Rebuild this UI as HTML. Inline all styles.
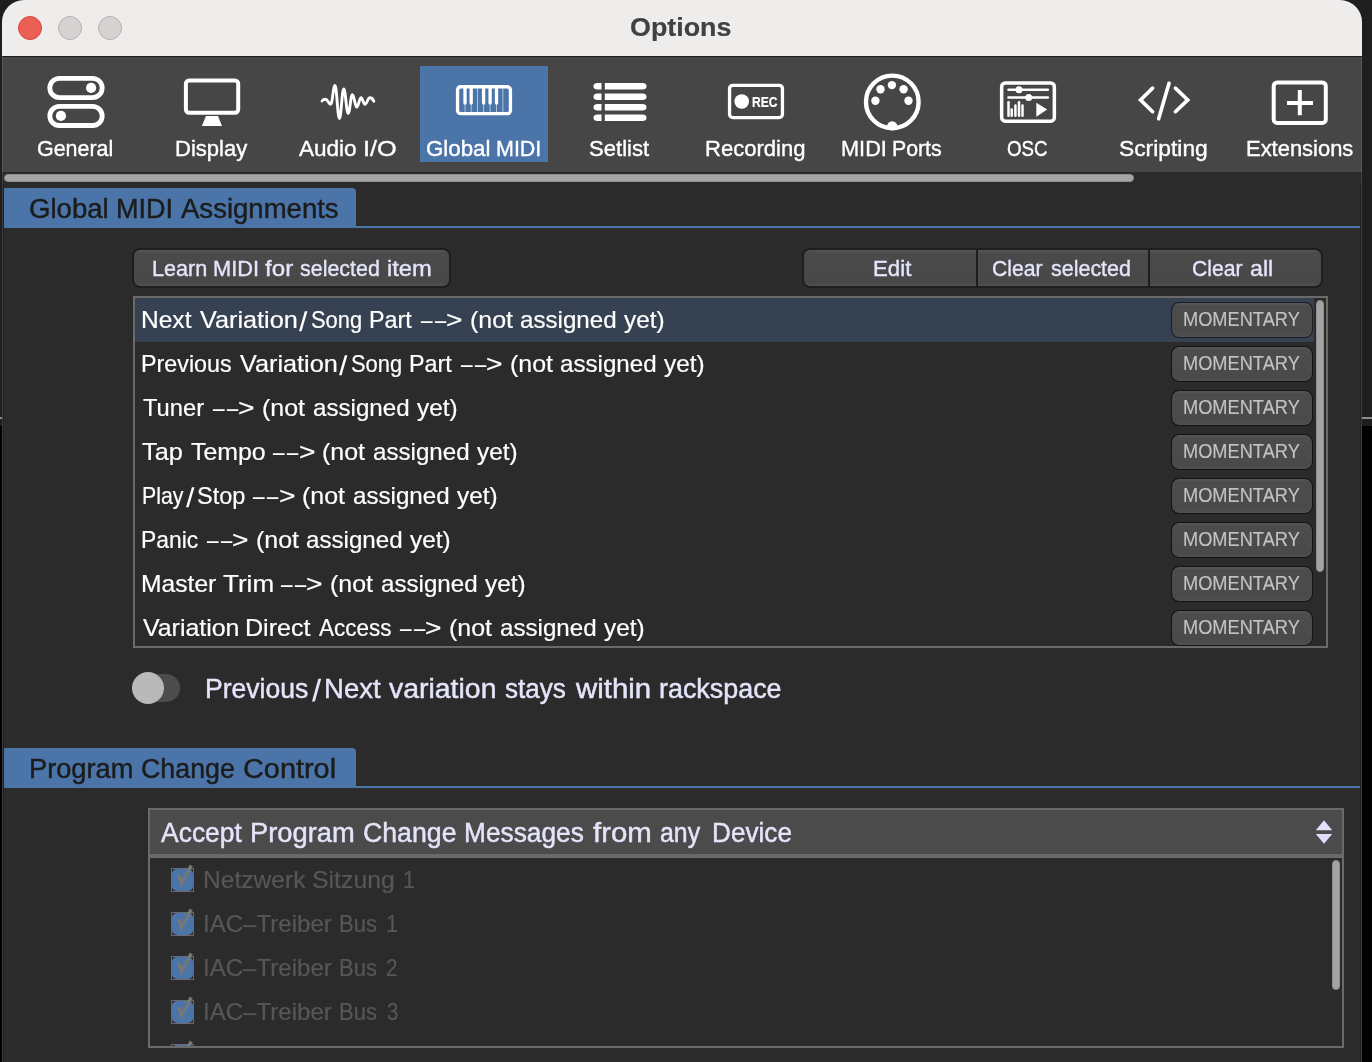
<!DOCTYPE html>
<html>
<head>
<meta charset="utf-8">
<title>Options</title>
<style>
*{box-sizing:border-box;margin:0;padding:0}
html,body{width:1372px;height:1062px;overflow:hidden;background:#000}
body{font-family:"Liberation Sans",sans-serif;position:relative;color:#fff}
.abs{position:absolute}
.w{position:absolute;white-space:pre;line-height:1;transform-origin:0 0;display:block}
#desk-top{left:0;top:0;width:1372px;height:426px;background:#1e1e1e}
#desk-line{left:0;top:417px;width:1372px;height:2px;background:#8c8c8c}
#win{left:2px;top:0;width:1360px;height:1080px;background:#2b2b2b;border-radius:22px 22px 0 0;overflow:hidden}
#titlebar{left:0;top:0;width:1360px;height:57px;background:#efedec;border-bottom:1px solid #1c1c1c}
.tl{position:absolute;top:16px;width:24px;height:24px;border-radius:50%}
#toolbar{left:0;top:57px;width:1360px;height:115px;background:#464646}
.tbitem{position:absolute;top:9px;width:128px;height:96px}
.tbitem.sel{background:#4b75a9}
.tblabel{position:absolute;left:0;width:128px;text-align:center;top:70px;font-size:22px;line-height:26px;white-space:pre;color:#fff}
.tbitem svg{position:absolute;left:0;top:0}
#hscroll{left:2px;top:174px;width:1130px;height:8px;border-radius:4px;background:#a6a6a6;border:1px solid #8f8f8f}
.sechead{position:absolute;left:2px;width:352px;height:39px;background:#4b75a9;border-radius:0 4px 0 0}
.secline{position:absolute;left:2px;width:1356px;height:2px;background:#4b75a9}
.sectxt{font-size:26px;color:#1c1c1c}
.btn{position:absolute;background:linear-gradient(#575757 0,#4a4a4a 3px,#484848 calc(100% - 3px),#525252 100%);border:2px solid #1e1e1e;border-radius:8px;color:#e4e4fa;font-size:22px;text-align:center;white-space:pre}
#list1{left:131px;top:296px;width:1195px;height:352px;border:2px solid #6a6a6a;background:#2b2b2b;overflow:hidden}
.row{position:absolute;left:0;width:1179px;height:44px}
.row.sel{background:#364252}
.row .rt{position:absolute;left:8px;top:9px;font-size:22px;line-height:26px;white-space:pre;color:#fff}
.mom{position:absolute;left:1036px;top:4px;width:142px;height:35.5px;border-radius:8px;background:linear-gradient(#585858 0,#4c4c4c 3px,#4a4a4a calc(100% - 3px),#525252 100%);border:1.5px solid rgba(0,0,0,.55);background-clip:padding-box;color:#c2c2c2;font-size:18px;line-height:32px;text-align:center}
.vthumb{position:absolute;width:8px;border-radius:4px;background:#a3a3a3;border:1px solid #8f8f8f}
#box2{left:146px;top:808px;width:1196px;height:240px;border:2px solid #6a6a6a;background:#2b2b2b;overflow:hidden}
#combo{left:0;top:0;width:1192px;height:44px;background:#4b4b4b}
#combodiv{left:0;top:44px;width:1192px;height:4px;background:#6a6a6a}
.crow{position:absolute;left:0;width:1180px;height:44px}
.cb{position:absolute;left:21px;top:10px;width:23px;height:24px;border:1px solid #6a6a6a}
.cb i{position:absolute;left:0;top:0;right:0;bottom:0;background:#4b75a9;border-radius:5px}
.crow svg{position:absolute;left:0;top:0}
.crow .ct{position:absolute;left:55px;top:9px;font-size:22px;line-height:26px;white-space:pre;color:#585858}
</style>
</head>
<body>
<div id="desk-top" class="abs"></div>
<div id="desk-line" class="abs"></div>
<div id="win" class="abs">
  <div id="titlebar" class="abs">
    <div class="tl" style="left:16px;background:#ec5f55;border:1px solid #d24b41"></div>
    <div class="tl" style="left:56px;background:#d5d3d2;border:1px solid #b3b1b0"></div>
    <div class="tl" style="left:96px;background:#d5d3d2;border:1px solid #b3b1b0"></div>
  </div>
  <div id="toolbar" class="abs">
    <div class="tbitem" style="left:10px"><svg width="128" height="96" viewBox="0 0 128 96"><g fill="none" stroke="#fff" stroke-width="4.8"><rect x="37.8" y="12.3" width="52.4" height="19.3" rx="9.65"/><rect x="37.8" y="40.4" width="52.4" height="19.1" rx="9.55"/></g><circle cx="79.1" cy="21.9" r="5.1" fill="#fff"/><circle cx="48.9" cy="49.9" r="5.1" fill="#fff"/></svg></div>
<div class="tbitem" style="left:146px"><svg width="128" height="96" viewBox="0 0 128 96"><rect x="37.9" y="14.4" width="52.3" height="32.4" rx="3.2" fill="none" stroke="#fff" stroke-width="4"/><path d="M58 50.1 L70 50.1 L74 59.9 L53.9 59.9 Z" fill="#fff"/></svg></div>
<div class="tbitem" style="left:282px"><svg width="128" height="96" viewBox="0 0 128 96"><path d="M38.06 34.99 C38.80 33.89 40.09 33.26 41.56 33.26 C43.71 33.26 44.54 38.25 46.69 38.25 C48.49 38.25 49.18 19.50 50.98 19.5 C52.84 19.50 53.55 52.48 55.41 52.48 C57.23 52.48 57.93 22.86 59.75 22.86 C61.61 22.86 62.32 47.35 64.18 47.35 C65.94 47.35 66.62 28.69 68.38 28.69 C70.24 28.69 70.95 41.05 72.81 41.05 C74.57 41.05 75.25 31.72 77.01 31.72 C78.67 31.72 79.31 38.25 80.97 38.25 C83.03 38.25 83.81 31.72 85.87 31.72 C87.54 31.72 89.01 33.02 89.84 35.22" fill="none" stroke="#fff" stroke-width="2.9" stroke-linecap="round" stroke-linejoin="round"/></svg></div>
<div class="tbitem sel" style="left:418px"><svg width="128" height="96" viewBox="0 0 128 96"><rect x="37.55" y="20.75" width="52.9" height="26.9" rx="3.2" fill="none" stroke="#fff" stroke-width="3.3"/><line x1="45" y1="21" x2="45" y2="47.5" stroke="#fff" stroke-opacity="0.55" stroke-width="1"/><line x1="51.2" y1="21" x2="51.2" y2="47.5" stroke="#fff" stroke-opacity="0.55" stroke-width="1"/><line x1="57.5" y1="21" x2="57.5" y2="47.5" stroke="#fff" stroke-opacity="0.55" stroke-width="1"/><line x1="63.6" y1="21" x2="63.6" y2="47.5" stroke="#fff" stroke-opacity="0.55" stroke-width="1"/><line x1="70.1" y1="21" x2="70.1" y2="47.5" stroke="#fff" stroke-opacity="0.55" stroke-width="1"/><line x1="76.5" y1="21" x2="76.5" y2="47.5" stroke="#fff" stroke-opacity="0.55" stroke-width="1"/><line x1="82.9" y1="21" x2="82.9" y2="47.5" stroke="#fff" stroke-opacity="0.55" stroke-width="1"/><line x1="45" y1="21" x2="45" y2="37" stroke="#fff" stroke-width="3.3" stroke-linecap="round"/><line x1="51.2" y1="21" x2="51.2" y2="37" stroke="#fff" stroke-width="3.3" stroke-linecap="round"/><line x1="63.6" y1="21" x2="63.6" y2="37" stroke="#fff" stroke-width="3.3" stroke-linecap="round"/><line x1="70.1" y1="21" x2="70.1" y2="37" stroke="#fff" stroke-width="3.3" stroke-linecap="round"/><line x1="76.5" y1="21" x2="76.5" y2="37" stroke="#fff" stroke-width="3.3" stroke-linecap="round"/></svg></div>
<div class="tbitem" style="left:554px"><svg width="128" height="96" viewBox="0 0 128 96"><g fill="#fff"><path d="M45.5 16.9 L41.80 16.9 A4.30 3.30 0 0 0 41.80 23.5 L45.5 23.5 Z"/><path d="M48.8 16.9 L86.20 16.9 A4.30 3.30 0 0 1 86.20 23.5 L48.8 23.5 Z"/><path d="M45.5 27.5 L41.70 27.5 A4.20 3.20 0 0 0 41.70 33.9 L45.5 33.9 Z"/><path d="M48.8 27.5 L86.30 27.5 A4.20 3.20 0 0 1 86.30 33.9 L48.8 33.9 Z"/><path d="M45.5 38 L41.75 38 A4.25 3.25 0 0 0 41.75 44.5 L45.5 44.5 Z"/><path d="M48.8 38 L86.25 38 A4.25 3.25 0 0 1 86.25 44.5 L48.8 44.5 Z"/><path d="M45.5 48.5 L41.75 48.5 A4.25 3.25 0 0 0 41.75 55 L45.5 55 Z"/><path d="M48.8 48.5 L86.25 48.5 A4.25 3.25 0 0 1 86.25 55 L48.8 55 Z"/></g></svg></div>
<div class="tbitem" style="left:690px"><svg width="128" height="96" viewBox="0 0 128 96"><rect x="37.55" y="19.35" width="52.9" height="32.2" rx="3.2" fill="none" stroke="#fff" stroke-width="3.3"/><circle cx="49.7" cy="35.5" r="7.3" fill="#fff"/></svg></div>
<div class="tbitem" style="left:826px"><svg width="128" height="96" viewBox="0 0 128 96"><defs><clipPath id="mp"><circle cx="64.3" cy="35.9" r="28.4"/></clipPath></defs><circle cx="64.3" cy="35.9" r="26.3" fill="none" stroke="#fff" stroke-width="4.4"/><g fill="#fff"><circle cx="63.9" cy="19.1" r="4.2"/><circle cx="52.5" cy="23.3" r="4.2"/><circle cx="75.6" cy="23.3" r="4.2"/><circle cx="47.4" cy="34.8" r="4.2"/><circle cx="80.5" cy="34.8" r="4.2"/><circle cx="64.2" cy="60.4" r="5.2" clip-path="url(#mp)"/></g></svg></div>
<div class="tbitem" style="left:962px"><svg width="128" height="96" viewBox="0 0 128 96"><rect x="37.65" y="17.05" width="52.7" height="38.1" rx="3.6" fill="none" stroke="#fff" stroke-width="3.5"/><g fill="#fff"><rect x="43.2" y="22.5" width="41.9" height="2.5" rx="1.25"/><rect x="43.2" y="30.3" width="41.9" height="2.5" rx="1.25"/><circle cx="55" cy="23.8" r="3.5"/><circle cx="64.7" cy="31.5" r="3.5"/><rect x="43.25" y="35" width="2.5" height="16" rx="1.2"/><rect x="46.45" y="42.3" width="2.5" height="8.700000000000003" rx="1.2"/><rect x="50.15" y="38.3" width="2.5" height="12.700000000000003" rx="1.2"/><rect x="53.75" y="35" width="2.5" height="16" rx="1.2"/><rect x="57.25" y="38.3" width="2.5" height="12.700000000000003" rx="1.2"/><path d="M72.3 36.8 L83.2 43.6 L72.3 50.7 Z"/></g></svg></div>
<div class="tbitem" style="left:1098px"><svg width="128" height="96" viewBox="0 0 128 96"><g fill="none" stroke="#fff" stroke-width="3.6" stroke-linecap="round" stroke-linejoin="miter"><path d="M52.6 22.1 L40.5 33.9 L52.6 45.7"/><path d="M69.04 17.25 L58.66 52.85"/><path d="M75.4 22.1 L87.75 33.9 L75.4 45.7"/></g></svg></div>
<div class="tbitem" style="left:1234px"><svg width="128" height="96" viewBox="0 0 128 96"><rect x="37.7" y="16.4" width="52.1" height="40.6" rx="3.6" fill="none" stroke="#fff" stroke-width="4"/><g fill="#fff"><rect x="51" y="35" width="26" height="4"/><rect x="61.8" y="24" width="4" height="25.2"/></g></svg></div>

  </div>
  <div id="hscroll" class="abs"></div>

  <div class="sechead" style="top:188px"></div>
  <div class="secline" style="top:226px"></div>

  <div class="btn" id="b-learn" style="left:130px;top:248px;width:319px;height:40px"></div>
  <div class="btn" id="b-edit" style="left:800px;top:248px;width:176px;height:40px;border-radius:8px 0 0 8px"></div>
  <div class="btn" id="b-clsel" style="left:974px;top:248px;width:174px;height:40px;border-radius:0"></div>
  <div class="btn" id="b-clall" style="left:1146px;top:248px;width:175px;height:40px;border-radius:0 8px 8px 0"></div>

  <div id="list1" class="abs">
    <div class="row sel" style="top:0px"><div class="mom"></div></div>
<div class="row" style="top:44px"><div class="mom"></div></div>
<div class="row" style="top:88px"><div class="mom"></div></div>
<div class="row" style="top:132px"><div class="mom"></div></div>
<div class="row" style="top:176px"><div class="mom"></div></div>
<div class="row" style="top:220px"><div class="mom"></div></div>
<div class="row" style="top:264px"><div class="mom"></div></div>
<div class="row" style="top:308px"><div class="mom"></div></div>

    <div class="vthumb" style="left:1181px;top:2px;height:272px"></div>
  </div>

  <div class="abs" id="tog-track" style="left:132px;top:674px;width:46px;height:28px;border-radius:14px;background:#4c4c4c"></div>
  <div class="abs" id="tog-knob" style="left:130px;top:672px;width:32px;height:32px;border-radius:16px;background:#b9b9b9"></div>

  <div class="sechead" style="top:748px"></div>
  <div class="secline" style="top:786px"></div>

  <div class="abs" style="left:1px;top:184px;width:1px;height:900px;background:#1f1f1f"></div>
  <div class="abs" style="left:1358px;top:184px;width:1px;height:900px;background:#1f1f1f"></div>
  <div class="abs" style="left:0;top:56px;width:1px;height:1100px;background:rgba(255,255,255,0.1)"></div>
  <div class="abs" style="left:1359px;top:56px;width:1px;height:1100px;background:rgba(255,255,255,0.1)"></div>
  <div id="box2" class="abs">
    <div id="combo" class="abs"></div>
    <svg class="abs" style="left:1162px;top:8px" width="24" height="32" viewBox="0 0 24 32"><path d="M12 2.2 L20.2 12.2 L3.8 12.2 Z M3.8 16 L20.2 16 L12 25.7 Z" fill="#e0e0f8"/></svg>
    <div id="combodiv" class="abs"></div>
    <div class="crow" style="top:48px"><div class="cb"><i></i></div><svg width="60" height="44" viewBox="0 0 60 44"><path d="M26.8 17.5 L29.7 16.1 L32.5 21.3 L39.7 6.4 L42.8 8.6 L31.4 29.8 Z" fill="#777"/></svg></div>
<div class="crow" style="top:92px"><div class="cb"><i></i></div><svg width="60" height="44" viewBox="0 0 60 44"><path d="M26.8 17.5 L29.7 16.1 L32.5 21.3 L39.7 6.4 L42.8 8.6 L31.4 29.8 Z" fill="#777"/></svg></div>
<div class="crow" style="top:136px"><div class="cb"><i></i></div><svg width="60" height="44" viewBox="0 0 60 44"><path d="M26.8 17.5 L29.7 16.1 L32.5 21.3 L39.7 6.4 L42.8 8.6 L31.4 29.8 Z" fill="#777"/></svg></div>
<div class="crow" style="top:180px"><div class="cb"><i></i></div><svg width="60" height="44" viewBox="0 0 60 44"><path d="M26.8 17.5 L29.7 16.1 L32.5 21.3 L39.7 6.4 L42.8 8.6 L31.4 29.8 Z" fill="#777"/></svg></div>
<div class="crow" style="top:224px"><div class="cb"><i></i></div><svg width="60" height="44" viewBox="0 0 60 44"><path d="M26.8 17.5 L29.7 16.1 L32.5 21.3 L39.7 6.4 L42.8 8.6 L31.4 29.8 Z" fill="#777"/></svg></div>

    <div class="vthumb" style="left:1182px;top:50px;height:130px"></div>
  </div>
</div>
<div id="textlayer" class="abs" style="left:0;top:0;width:1372px;height:1062px;overflow:hidden;will-change:transform">
<div id="tb0" style="position:absolute;left:0;top:137px;font-size:22.7px;font-weight:400;color:#ffffff;-webkit-text-stroke:0.38px #ffffff"><span class="w" style="left:37.41px;transform:scaleX(0.9451)">General</span></div>
<div id="tb1" style="position:absolute;left:0;top:137px;font-size:22.7px;font-weight:400;color:#ffffff;-webkit-text-stroke:0.38px #ffffff"><span class="w" style="left:175.39px;transform:scaleX(0.9713)">Display</span></div>
<div id="tb2" style="position:absolute;left:0;top:137px;font-size:22.7px;font-weight:400;color:#ffffff;-webkit-text-stroke:0.38px #ffffff"><span class="w" style="left:299.44px;transform:scaleX(0.9933)">Audio</span><span class="w" style="left:362.96px;transform:scaleX(1.1146)">I/O</span></div>
<div id="tb3" style="position:absolute;left:0;top:137px;font-size:22.7px;font-weight:400;color:#ffffff;-webkit-text-stroke:0.38px #ffffff"><span class="w" style="left:425.71px;transform:scaleX(0.9820)">Global</span><span class="w" style="left:496.03px;transform:scaleX(0.9459)">MIDI</span></div>
<div id="tb4" style="position:absolute;left:0;top:137px;font-size:22.7px;font-weight:400;color:#ffffff;-webkit-text-stroke:0.38px #ffffff"><span class="w" style="left:589.12px;transform:scaleX(0.9732)">Setlist</span></div>
<div id="tb5" style="position:absolute;left:0;top:137px;font-size:22.7px;font-weight:400;color:#ffffff;-webkit-text-stroke:0.38px #ffffff"><span class="w" style="left:705.24px;transform:scaleX(0.9713)">Recording</span></div>
<div id="tb6" style="position:absolute;left:0;top:137px;font-size:22.7px;font-weight:400;color:#ffffff;-webkit-text-stroke:0.38px #ffffff"><span class="w" style="left:840.51px;transform:scaleX(0.9573)">MIDI</span><span class="w" style="left:891.55px;transform:scaleX(0.9381)">Ports</span></div>
<div id="tb7" style="position:absolute;left:0;top:137px;font-size:22.7px;font-weight:400;color:#ffffff;-webkit-text-stroke:0.38px #ffffff"><span class="w" style="left:1007.37px;transform:scaleX(0.8237)">OSC</span></div>
<div id="tb8" style="position:absolute;left:0;top:137px;font-size:22.7px;font-weight:400;color:#ffffff;-webkit-text-stroke:0.38px #ffffff"><span class="w" style="left:1119.18px;transform:scaleX(1.0055)">Scripting</span></div>
<div id="tb9" style="position:absolute;left:0;top:137px;font-size:22.7px;font-weight:400;color:#ffffff;-webkit-text-stroke:0.38px #ffffff"><span class="w" style="left:1245.60px;transform:scaleX(0.9670)">Extensions</span></div>
<div id="rec" style="position:absolute;left:0;top:94px;font-size:15.4px;font-weight:700;color:#ffffff;-webkit-text-stroke:0.20px #ffffff"><span class="w" style="left:751.92px;transform:scaleX(0.7839)">REC</span></div>
<div id="title" style="position:absolute;left:0;top:14px;font-size:26.5px;font-weight:700;color:#414141;-webkit-text-stroke:0.20px #414141"><span class="w" style="left:629.99px;transform:scaleX(1.0133)">Options</span></div>
<div id="sec1" style="position:absolute;left:0;top:196px;font-size:27.0px;font-weight:400;color:#1c1c1c;-webkit-text-stroke:0.45px #1c1c1c"><span class="w" style="left:29.45px;transform:scaleX(1.0207)">Global</span><span class="w" style="left:115.97px;transform:scaleX(1.0010)">MIDI</span><span class="w" style="left:181.22px;transform:scaleX(1.0199)">Assignments</span></div>
<div id="sec2" style="position:absolute;left:0;top:756px;font-size:27.0px;font-weight:400;color:#1c1c1c;-webkit-text-stroke:0.45px #1c1c1c"><span class="w" style="left:29.21px;transform:scaleX(1.0080)">Program</span><span class="w" style="left:141.24px;transform:scaleX(0.9924)">Change</span><span class="w" style="left:243.12px;transform:scaleX(1.0693)">Control</span></div>
<div id="b-learn" style="position:absolute;left:0;top:258px;font-size:22.2px;font-weight:400;color:#e4e4fa;-webkit-text-stroke:0.37px #e4e4fa"><span class="w" style="left:151.78px;transform:scaleX(0.9744)">Learn</span><span class="w" style="left:212.67px;transform:scaleX(0.9821)">MIDI</span><span class="w" style="left:265.11px;transform:scaleX(1.0903)">for</span><span class="w" style="left:300.26px;transform:scaleX(0.9656)">selected</span><span class="w" style="left:386.68px;transform:scaleX(1.0700)">item</span></div>
<div id="b-edit" style="position:absolute;left:0;top:258px;font-size:22.2px;font-weight:400;color:#e4e4fa;-webkit-text-stroke:0.37px #e4e4fa"><span class="w" style="left:873.03px;transform:scaleX(1.0022)">Edit</span></div>
<div id="b-clsel" style="position:absolute;left:0;top:258px;font-size:22.2px;font-weight:400;color:#e4e4fa;-webkit-text-stroke:0.37px #e4e4fa"><span class="w" style="left:991.99px;transform:scaleX(0.9540)">Clear</span><span class="w" style="left:1050.71px;transform:scaleX(0.9675)">selected</span></div>
<div id="b-clall" style="position:absolute;left:0;top:258px;font-size:22.2px;font-weight:400;color:#e4e4fa;-webkit-text-stroke:0.37px #e4e4fa"><span class="w" style="left:1191.99px;transform:scaleX(0.9540)">Clear</span><span class="w" style="left:1249.89px;transform:scaleX(1.0446)">all</span></div>
<div id="r0" style="position:absolute;left:0;top:308px;font-size:24.0px;font-weight:400;color:#ffffff;-webkit-text-stroke:0.20px #ffffff"><span class="w" style="left:141.06px;transform:scaleX(1.0222)">Next</span><span class="w" style="left:199.59px;transform:scaleX(1.0526)">Variation</span><svg style="position:absolute;left:299.10px;top:0;overflow:visible" width="8.40" height="28.8"><path d="M5.81 3.25 L8.40 3.25 L2.59 23.35 L0 23.35 Z" fill="#ffffff"/></svg><span class="w" style="left:310.71px;transform:scaleX(0.9117)">Song</span><span class="w" style="left:369.16px;transform:scaleX(0.9713)">Part</span><span class="w" style="left:420.95px;transform:scaleX(0.8604)">–</span><span class="w" style="left:434.65px;transform:scaleX(0.8302)">–</span><span class="w" style="left:446.08px;transform:scaleX(1.1739)">&gt;</span><span class="w" style="left:469.59px;transform:scaleX(1.0390)">(not</span><span class="w" style="left:520.39px;transform:scaleX(1.0059)">assigned</span><span class="w" style="left:624.40px;transform:scaleX(1.0169)">yet)</span></div>
<div id="m0" style="position:absolute;left:0;top:310px;font-size:19.5px;font-weight:400;color:#c2c2c2;-webkit-text-stroke:0.15px #c2c2c2"><span class="w" style="left:1183.47px;transform:scaleX(0.9348)">MOMENTARY</span></div>
<div id="r1" style="position:absolute;left:0;top:352px;font-size:24.0px;font-weight:400;color:#ffffff;-webkit-text-stroke:0.20px #ffffff"><span class="w" style="left:141.16px;transform:scaleX(0.9702)">Previous</span><span class="w" style="left:239.59px;transform:scaleX(1.0526)">Variation</span><svg style="position:absolute;left:339.10px;top:0;overflow:visible" width="8.40" height="28.8"><path d="M5.81 3.25 L8.40 3.25 L2.59 23.35 L0 23.35 Z" fill="#ffffff"/></svg><span class="w" style="left:350.71px;transform:scaleX(0.9117)">Song</span><span class="w" style="left:409.16px;transform:scaleX(0.9713)">Part</span><span class="w" style="left:460.95px;transform:scaleX(0.8604)">–</span><span class="w" style="left:474.65px;transform:scaleX(0.8302)">–</span><span class="w" style="left:486.08px;transform:scaleX(1.1739)">&gt;</span><span class="w" style="left:509.59px;transform:scaleX(1.0390)">(not</span><span class="w" style="left:560.39px;transform:scaleX(1.0059)">assigned</span><span class="w" style="left:664.40px;transform:scaleX(1.0169)">yet)</span></div>
<div id="m1" style="position:absolute;left:0;top:354px;font-size:19.5px;font-weight:400;color:#c2c2c2;-webkit-text-stroke:0.15px #c2c2c2"><span class="w" style="left:1183.47px;transform:scaleX(0.9348)">MOMENTARY</span></div>
<div id="r2" style="position:absolute;left:0;top:396px;font-size:24.0px;font-weight:400;color:#ffffff;-webkit-text-stroke:0.20px #ffffff"><span class="w" style="left:143.11px;transform:scaleX(0.9885)">Tuner</span><span class="w" style="left:213.20px;transform:scaleX(0.8604)">–</span><span class="w" style="left:226.90px;transform:scaleX(0.8302)">–</span><span class="w" style="left:238.33px;transform:scaleX(1.1739)">&gt;</span><span class="w" style="left:261.84px;transform:scaleX(1.0390)">(not</span><span class="w" style="left:312.64px;transform:scaleX(1.0059)">assigned</span><span class="w" style="left:416.65px;transform:scaleX(1.0169)">yet)</span></div>
<div id="m2" style="position:absolute;left:0;top:398px;font-size:19.5px;font-weight:400;color:#c2c2c2;-webkit-text-stroke:0.15px #c2c2c2"><span class="w" style="left:1183.47px;transform:scaleX(0.9348)">MOMENTARY</span></div>
<div id="r3" style="position:absolute;left:0;top:440px;font-size:24.0px;font-weight:400;color:#ffffff;-webkit-text-stroke:0.20px #ffffff"><span class="w" style="left:142.32px;transform:scaleX(1.0550)">Tap</span><span class="w" style="left:190.58px;transform:scaleX(1.0362)">Tempo</span><span class="w" style="left:273.45px;transform:scaleX(0.8604)">–</span><span class="w" style="left:287.15px;transform:scaleX(0.8302)">–</span><span class="w" style="left:298.58px;transform:scaleX(1.1739)">&gt;</span><span class="w" style="left:322.09px;transform:scaleX(1.0390)">(not</span><span class="w" style="left:372.89px;transform:scaleX(1.0059)">assigned</span><span class="w" style="left:476.90px;transform:scaleX(1.0169)">yet)</span></div>
<div id="m3" style="position:absolute;left:0;top:442px;font-size:19.5px;font-weight:400;color:#c2c2c2;-webkit-text-stroke:0.15px #c2c2c2"><span class="w" style="left:1183.47px;transform:scaleX(0.9348)">MOMENTARY</span></div>
<div id="r4" style="position:absolute;left:0;top:484px;font-size:24.0px;font-weight:400;color:#ffffff;-webkit-text-stroke:0.20px #ffffff"><span class="w" style="left:141.63px;transform:scaleX(0.8854)">Play</span><svg style="position:absolute;left:186.40px;top:0;overflow:visible" width="8.50" height="28.8"><path d="M5.91 3.25 L8.50 3.25 L2.59 23.35 L0 23.35 Z" fill="#ffffff"/></svg><span class="w" style="left:196.88px;transform:scaleX(0.9787)">Stop</span><span class="w" style="left:253.40px;transform:scaleX(0.8604)">–</span><span class="w" style="left:267.10px;transform:scaleX(0.8302)">–</span><span class="w" style="left:278.53px;transform:scaleX(1.1739)">&gt;</span><span class="w" style="left:302.04px;transform:scaleX(1.0390)">(not</span><span class="w" style="left:352.84px;transform:scaleX(1.0059)">assigned</span><span class="w" style="left:456.85px;transform:scaleX(1.0169)">yet)</span></div>
<div id="m4" style="position:absolute;left:0;top:486px;font-size:19.5px;font-weight:400;color:#c2c2c2;-webkit-text-stroke:0.15px #c2c2c2"><span class="w" style="left:1183.47px;transform:scaleX(0.9348)">MOMENTARY</span></div>
<div id="r5" style="position:absolute;left:0;top:528px;font-size:24.0px;font-weight:400;color:#ffffff;-webkit-text-stroke:0.20px #ffffff"><span class="w" style="left:141.30px;transform:scaleX(0.9520)">Panic</span><span class="w" style="left:207.00px;transform:scaleX(0.8604)">–</span><span class="w" style="left:220.70px;transform:scaleX(0.8302)">–</span><span class="w" style="left:232.13px;transform:scaleX(1.1739)">&gt;</span><span class="w" style="left:255.64px;transform:scaleX(1.0390)">(not</span><span class="w" style="left:306.44px;transform:scaleX(1.0059)">assigned</span><span class="w" style="left:410.45px;transform:scaleX(1.0169)">yet)</span></div>
<div id="m5" style="position:absolute;left:0;top:530px;font-size:19.5px;font-weight:400;color:#c2c2c2;-webkit-text-stroke:0.15px #c2c2c2"><span class="w" style="left:1183.47px;transform:scaleX(0.9348)">MOMENTARY</span></div>
<div id="r6" style="position:absolute;left:0;top:572px;font-size:24.0px;font-weight:400;color:#ffffff;-webkit-text-stroke:0.20px #ffffff"><span class="w" style="left:141.15px;transform:scaleX(1.0268)">Master</span><span class="w" style="left:222.66px;transform:scaleX(1.0844)">Trim</span><span class="w" style="left:281.30px;transform:scaleX(0.8604)">–</span><span class="w" style="left:295.00px;transform:scaleX(0.8302)">–</span><span class="w" style="left:306.43px;transform:scaleX(1.1739)">&gt;</span><span class="w" style="left:329.94px;transform:scaleX(1.0390)">(not</span><span class="w" style="left:380.74px;transform:scaleX(1.0059)">assigned</span><span class="w" style="left:484.75px;transform:scaleX(1.0169)">yet)</span></div>
<div id="m6" style="position:absolute;left:0;top:574px;font-size:19.5px;font-weight:400;color:#c2c2c2;-webkit-text-stroke:0.15px #c2c2c2"><span class="w" style="left:1183.47px;transform:scaleX(0.9348)">MOMENTARY</span></div>
<div id="r7" style="position:absolute;left:0;top:616px;font-size:24.0px;font-weight:400;color:#ffffff;-webkit-text-stroke:0.20px #ffffff"><span class="w" style="left:142.94px;transform:scaleX(1.0378)">Variation</span><span class="w" style="left:245.21px;transform:scaleX(1.0446)">Direct</span><span class="w" style="left:319.27px;transform:scaleX(0.9377)">Access</span><span class="w" style="left:400.30px;transform:scaleX(0.8604)">–</span><span class="w" style="left:414.00px;transform:scaleX(0.8302)">–</span><span class="w" style="left:425.43px;transform:scaleX(1.1739)">&gt;</span><span class="w" style="left:448.94px;transform:scaleX(1.0390)">(not</span><span class="w" style="left:499.74px;transform:scaleX(1.0059)">assigned</span><span class="w" style="left:603.75px;transform:scaleX(1.0169)">yet)</span></div>
<div id="m7" style="position:absolute;left:0;top:618px;font-size:19.5px;font-weight:400;color:#c2c2c2;-webkit-text-stroke:0.15px #c2c2c2"><span class="w" style="left:1183.47px;transform:scaleX(0.9348)">MOMENTARY</span></div>
<div id="toglabel" style="position:absolute;left:0;top:676px;font-size:27.0px;font-weight:400;color:#e4e4fa;-webkit-text-stroke:0.45px #e4e4fa"><span class="w" style="left:205.26px;transform:scaleX(0.9833)">Previous</span><svg style="position:absolute;left:311.60px;top:0;overflow:visible" width="9.20" height="32.4"><path d="M6.29 2.80 L9.20 2.80 L2.91 25.60 L0 25.60 Z" fill="#e4e4fa"/></svg><span class="w" style="left:323.93px;transform:scaleX(1.0198)">Next</span><span class="w" style="left:388.96px;transform:scaleX(1.0530)">variation</span><span class="w" style="left:505.30px;transform:scaleX(0.9657)">stays</span><span class="w" style="left:575.93px;transform:scaleX(1.0892)">within</span><span class="w" style="left:658.88px;transform:scaleX(0.9958)">rackspace</span></div>
<div id="combotxt" style="position:absolute;left:0;top:820px;font-size:27.0px;font-weight:400;color:#e4e4fa;-webkit-text-stroke:0.45px #e4e4fa"><span class="w" style="left:160.58px;transform:scaleX(0.9799)">Accept</span><span class="w" style="left:250.45px;transform:scaleX(1.0106)">Program</span><span class="w" style="left:362.84px;transform:scaleX(0.9886)">Change</span><span class="w" style="left:464.04px;transform:scaleX(0.9733)">Messages</span><span class="w" style="left:593.18px;transform:scaleX(1.0889)">from</span><span class="w" style="left:660.47px;transform:scaleX(0.9219)">any</span><span class="w" style="left:711.84px;transform:scaleX(0.9690)">Device</span></div>
<div id="c0" style="position:absolute;left:0;top:868px;font-size:24.0px;font-weight:400;color:#575757;-webkit-text-stroke:0.20px #575757"><span class="w" style="left:203.25px;transform:scaleX(1.0245)">Netzwerk</span><span class="w" style="left:312.21px;transform:scaleX(1.0343)">Sitzung</span><span class="w" style="left:403.13px;transform:scaleX(0.8952)">1</span></div>
<div id="c1" style="position:absolute;left:0;top:912px;font-size:24.0px;font-weight:400;color:#575757;-webkit-text-stroke:0.20px #575757"><span class="w" style="left:203.04px;transform:scaleX(1.0028)">IAC–Treiber</span><span class="w" style="left:338.57px;transform:scaleX(0.9169)">Bus</span><span class="w" style="left:385.82px;transform:scaleX(0.9048)">1</span></div>
<div id="c2" style="position:absolute;left:0;top:956px;font-size:24.0px;font-weight:400;color:#575757;-webkit-text-stroke:0.20px #575757"><span class="w" style="left:203.04px;transform:scaleX(1.0028)">IAC–Treiber</span><span class="w" style="left:338.57px;transform:scaleX(0.9169)">Bus</span><span class="w" style="left:386.32px;transform:scaleX(0.8636)">2</span></div>
<div id="c3" style="position:absolute;left:0;top:1000px;font-size:24.0px;font-weight:400;color:#575757;-webkit-text-stroke:0.20px #575757"><span class="w" style="left:203.04px;transform:scaleX(1.0028)">IAC–Treiber</span><span class="w" style="left:338.57px;transform:scaleX(0.9169)">Bus</span><span class="w" style="left:386.55px;transform:scaleX(0.8500)">3</span></div>

</div>
</body>
</html>
